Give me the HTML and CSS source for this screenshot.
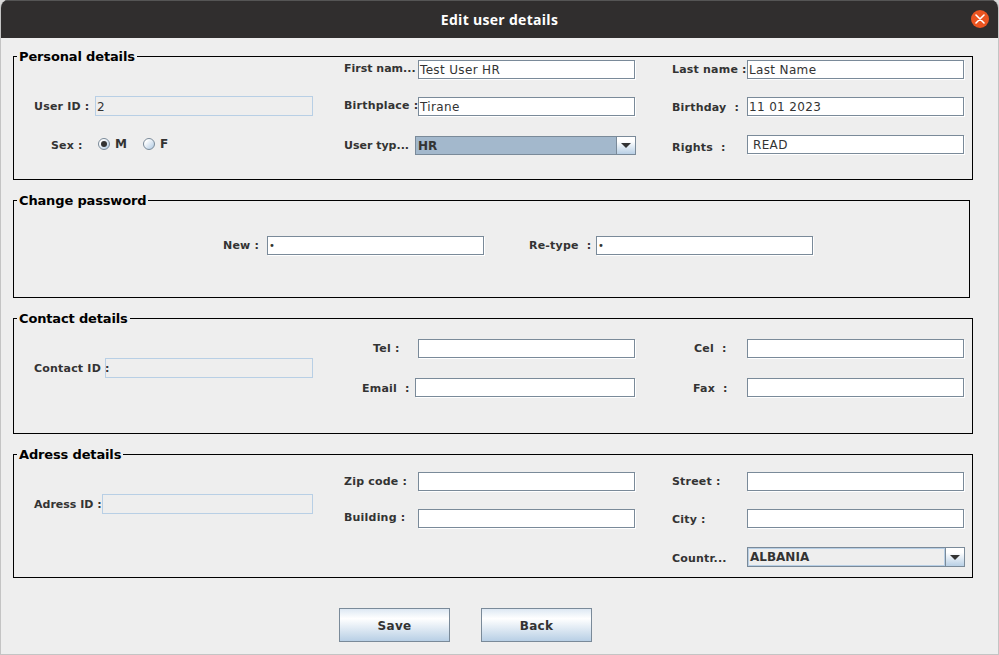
FILE: index.html
```html
<!DOCTYPE html>
<html lang="en">
<head>
<meta charset="utf-8">
<title>Edit user details</title>
<link rel="stylesheet" href="styles.css">
</head>
<body>
<div class="window">
  <header class="titlebar">
    <span class="title">Edit user details</span>
    <button class="close" aria-label="Close">
      <svg width="10" height="10" viewBox="0 0 10 10"><path d="M1 1L9 9M9 1L1 9" stroke="#fff" stroke-width="1.6" stroke-linecap="round"/></svg>
    </button>
  </header>
  <main class="content">
    <section class="panel p-personal">
      <h2 class="legend">Personal details</h2>
      <div class="col col1 c-personal">
        <div class="row"><span class="lbl w61 dn1">User ID :</span><div class="field off w218 h20">2</div></div>
        <div class="row sex">
          <span class="lbl sexlbl dn2">Sex :</span>
          <span class="radio on"></span><span class="rlbl">M</span>
          <span class="radio second"></span><span class="rlbl">F</span>
        </div>
      </div>
      <div class="col col2">
        <div class="row r1"><span class="lbl w74 up1 tight">First nam...</span><div class="field w217">Test User HR</div></div>
        <div class="row r2"><span class="lbl w74 up1">Birthplace :</span><div class="field w217">Tirane</div></div>
        <div class="row r3"><span class="lbl w71 tight">User typ...</span><div class="combo sel w221"><span class="cval">HR</span><span class="carrow"><i></i></span></div></div>
      </div>
      <div class="col col3">
        <div class="row r1"><span class="lbl w75">Last name :</span><div class="field w217">Last Name</div></div>
        <div class="row r2"><span class="lbl w75 dn1">Birthday&nbsp; :</span><div class="field w217">11 01 2023</div></div>
        <div class="row r3b"><span class="lbl w75 dn3">Rights&nbsp; :</span><div class="field w217 ind">READ</div></div>
      </div>
    </section>

    <section class="panel p-password">
      <h2 class="legend">Change password</h2>
      <div class="pwrow">
        <span class="lbl w44">New :</span><div class="field w217 dot">•</div>
        <span class="lbl w67 retype">Re-type&nbsp; :</span><div class="field w217 dot">•</div>
      </div>
    </section>

    <section class="panel p-contact">
      <h2 class="legend">Contact details</h2>
      <div class="col col1 c-contact">
        <div class="row"><span class="lbl w71 dn1">Contact ID :</span><div class="field off w208 h20"></div></div>
      </div>
      <div class="col col2 c2-contact">
        <div class="row r-tel"><span class="lbl w74 pl29">Tel :</span><div class="field w217"></div></div>
        <div class="row r-email"><span class="lbl w71 pl18 dn1">Email&nbsp; :</span><div class="field w220"></div></div>
      </div>
      <div class="col col3 c2-contact">
        <div class="row r-tel"><span class="lbl w75 pl22">Cel&nbsp; :</span><div class="field w217"></div></div>
        <div class="row r-email"><span class="lbl w75 pl21 dn1">Fax&nbsp; :</span><div class="field w217"></div></div>
      </div>
    </section>

    <section class="panel p-address">
      <h2 class="legend">Adress details</h2>
      <div class="col col1 c-address">
        <div class="row"><span class="lbl w68 dn1 tight">Adress ID :</span><div class="field off w211 h20"></div></div>
      </div>
      <div class="col col2 c2-address">
        <div class="row"><span class="lbl w74">Zip code :</span><div class="field w217"></div></div>
        <div class="row r2"><span class="lbl w74 up1">Building :</span><div class="field w217"></div></div>
      </div>
      <div class="col col3 c2-address">
        <div class="row"><span class="lbl w75">Street :</span><div class="field w217"></div></div>
        <div class="row r2"><span class="lbl w75 dn1">City :</span><div class="field w217"></div></div>
        <div class="row r-country"><span class="lbl w75 dn2">Countr...</span><div class="combo focus w218"><span class="cval">ALBANIA</span><span class="carrow"><i></i></span></div></div>
      </div>
    </section>

    <div class="actions">
      <button class="btn">Save</button>
      <button class="btn">Back</button>
    </div>
  </main>
</div>
</body>
</html>
```

FILE: styles.css
```css
* { box-sizing: border-box; }
html, body { margin: 0; height: 100%; background: #d9d9d9; }
body { font-family: "DejaVu Sans", sans-serif; color: #333; overflow: hidden; }

.window {
  width: 999px; height: 655px; display: flex; flex-direction: column;
  border-radius: 8px 8px 0 0; overflow: hidden; background: #eee;
  border: 1px solid #c4c4c4; border-top: 0;
}
.titlebar {
  height: 38px; flex: none; background: #302e2e; border-top: 1px solid #555;
  display: flex; align-items: center; justify-content: center; position: relative;
  margin: 0 -1px;
}
.title { font: 700 14px "Open Sans", sans-serif; color: #fff; letter-spacing: .3px; }
.close {
  position: absolute; right: 10px; top: 9px; width: 18px; height: 18px; padding: 0;
  border: 0; border-radius: 50%; background: #ea5420;
  display: flex; align-items: center; justify-content: center;
}
.content { flex: 1; padding: 18px 0 0 12px; }

.panel {
  position: relative; border: 1px solid #000; width: 960px;
  display: flex; align-items: flex-start; margin-bottom: 20px;
}
.p-personal { height: 124px; }
.p-password { height: 98px; width: 957px; }
.p-contact { height: 116px; }
.p-address { height: 124px; margin-bottom: 30px; }

.legend {
  position: absolute; left: 3px; top: -8px; margin: 0; padding: 0 2px;
  background: #eee; color: #000; font: 700 13px/16px "DejaVu Sans", sans-serif;
  white-space: nowrap; letter-spacing: -.15px;
}

.col { display: flex; flex-direction: column; }
.col1 { width: 330px; padding-left: 20px; }
.col2 { width: 328px; padding-top: 3px; }
.col3 { padding-top: 3px; }

.row { display: flex; align-items: center; height: 19px; }
.r2 { margin-top: 18px; }
.r3 { margin-top: 20px; }
.r3b { margin-top: 19px; }

.c-personal { padding-top: 39px; }
.c-personal .row:first-child { height: 20px; }
.sex { margin-top: 18px; height: 20px; }
.c-contact { padding-top: 39px; }
.c-contact .row, .c-address .row { height: 20px; }
.c-address { padding-top: 39px; }
.c2-contact { padding-top: 20px; }
.r-email { margin-top: 20px; }
.c2-address { padding-top: 17px; }
.r-country { margin-top: 19px; height: 20px; }

.lbl { font: 700 11px/14px "DejaVu Sans", sans-serif; color: #333; white-space: pre; flex: none; letter-spacing: .2px; }
.tight { letter-spacing: 0; }
.up1 { margin-bottom: 2px; }
.dn1 { margin-top: 2px; }
.dn2 { margin-top: 4px; }
.dn3 { margin-top: 6px; }
.w44 { width: 44px; } .w61 { width: 61px; } .w67 { width: 67px; } .w68 { width: 68px; }
.w71 { width: 71px; } .w74 { width: 74px; } .w75 { width: 75px; }
.pl18 { padding-left: 18px; } .pl21 { padding-left: 21px; } .pl22 { padding-left: 22px; } .pl29 { padding-left: 29px; }

.field {
  height: 19px; flex: none; background: #fff; border: 1px solid #7a8a99;
  box-shadow: 1px 1px 0 #fff; font: 12px/19px "DejaVu Sans", sans-serif; color: #333;
  padding-left: 1px; letter-spacing: .35px;
}
.w217 { width: 217px; } .w220 { width: 220px; } .w218 { width: 218px; }
.w208 { width: 208px; } .w211 { width: 211px; }
.h20 { height: 20px; line-height: 20px; }
.off { background: transparent; border-color: #b8cfe5; box-shadow: none; padding-left: 1px; }
.ind { padding-left: 5px; line-height: 18px; }
.dot { font-size: 10px; line-height: 17px; padding-left: 1px; }

.sexlbl { width: 64px; padding-left: 17px; }
.radio {
  width: 12px; height: 12px; border-radius: 50%; border: 1px solid #7a8a99; flex: none;
  background: linear-gradient(135deg, #fff 20%, #b8cfe5 90%); display: flex;
  align-items: center; justify-content: center;
}
.radio.on::after { content: ""; width: 6px; height: 6px; border-radius: 50%; background: #333; }
.radio.second { margin-left: 15px; }
.rlbl { font: 700 12px/14px "DejaVu Sans", sans-serif; margin-left: 5px; width: 13px; }

.combo {
  flex: none; height: 19px; border: 1px solid #7a8a99; display: flex; align-items: stretch;
  font: 700 12px/19px "DejaVu Sans", sans-serif; color: #333;
}
.w221 { width: 221px; }
.combo.w218 { height: 20px; }
.cval { flex: 1; padding-left: 2px; }
.sel .cval { background: #a3b8cc; }
.focus .cval { background: #eee; outline: 1px solid #b8cfe5; outline-offset: -1px; line-height: 18px; }
.carrow {
  width: 19px; flex: none; border-left: 1px solid #7a8a99; display: flex; align-items: center; justify-content: center;
  background: linear-gradient(#fff, #fff 25%, #b8cfe5);
}
.carrow i { width: 0; height: 0; border: 5px solid transparent; border-top: 5px solid #333; border-bottom: 0; }

.pwrow { display: flex; align-items: center; height: 19px; margin: 35px 0 0 209px; }
.retype { margin-left: 45px; }

.actions { display: flex; gap: 31px; padding-left: 326px; }
.btn {
  width: 111px; height: 34px; padding: 2px 0 0; border: 1px solid #7a8a99; color: #333;
  background: linear-gradient(#dde8f3, #fff 30%, #b8cfe5);
  font: 700 12px "DejaVu Sans", sans-serif; letter-spacing: .3px;
}
```
